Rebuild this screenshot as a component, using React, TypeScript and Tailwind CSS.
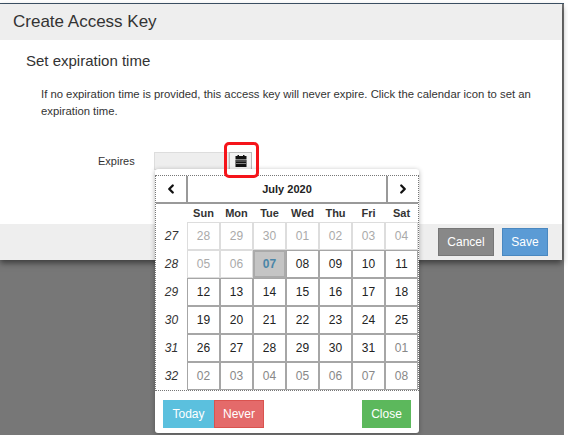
import React from 'react';
import { ChevronLeft, ChevronRight } from 'lucide-react';

type Day = { label: string; disabled?: boolean; muted?: boolean; today?: boolean };

const weeks: { num: number; days: Day[] }[] = [
  { num: 27, days: ['28', '29', '30', '01', '02', '03', '04'].map((label) => ({ label, disabled: true })) },
  {
    num: 28,
    days: [
      { label: '05', disabled: true },
      { label: '06', disabled: true },
      { label: '07', today: true },
      { label: '08' },
      { label: '09' },
      { label: '10' },
      { label: '11' },
    ],
  },
  { num: 29, days: ['12', '13', '14', '15', '16', '17', '18'].map((label) => ({ label })) },
  { num: 30, days: ['19', '20', '21', '22', '23', '24', '25'].map((label) => ({ label })) },
  {
    num: 31,
    days: [
      { label: '26' },
      { label: '27' },
      { label: '28' },
      { label: '29' },
      { label: '30' },
      { label: '31' },
      { label: '01', muted: true },
    ],
  },
  { num: 32, days: ['02', '03', '04', '05', '06', '07', '08'].map((label) => ({ label, muted: true })) },
];

const dayNames = ['Sun', 'Mon', 'Tue', 'Wed', 'Thu', 'Fri', 'Sat'];

function CalendarIcon() {
  return (
    <svg width="12" height="12" viewBox="0 0 12 12" fill="#111">
      <rect x="2.5" y="0" width="1.5" height="2" />
      <rect x="8" y="0" width="1.5" height="2" />
      <rect x="0.5" y="1" width="11" height="3" />
      <path d="M.5 4.5h11V12H.5zM1.5 5.5v1h1v-1zm2 0v1h1v-1zm2 0v1h1v-1zm2 0v1h1v-1zm2 0v1h1v-1zM1.5 8v1h1V8zm2 0v1h1V8zm2 0v1h1V8zm2 0v1h1V8zm2 0v1h1V8z" fillRule="evenodd" />
    </svg>
  );
}

function dayClass(d: Day) {
  if (d.today) return 'w-[33px] flex items-center justify-center font-bold text-[12px] text-[#4a86a8] bg-[#c4c4c4] border-2 border-[#aaa]';
  if (d.disabled) return 'w-[33px] flex items-center justify-center text-[12px] text-[#aaa] bg-white border border-[#ddd]';
  if (d.muted) return 'w-[33px] flex items-center justify-center text-[12px] text-[#888] bg-white border border-[#a6a6a6]';
  return 'w-[33px] flex items-center justify-center font-medium text-[12px] text-[#222] bg-white border border-[#a6a6a6]';
}

function DatePicker() {
  return (
    <div className="absolute left-[155px] top-[169px] w-[264px] h-[264px] bg-white rounded-[3px] shadow-[0_1px_5px_rgba(0,0,0,0.3)] pt-[6px]">
      <div className="border border-dotted border-[#777]">
        <div className="flex h-[28px] border-b-2 border-[#999]">
          <div className="w-[32px] flex items-center justify-center border-r-2 border-[#999]">
            <ChevronLeft size={14} strokeWidth={4} className="text-[#111]" />
          </div>
          <div className="flex-1 flex items-center justify-center font-bold text-[11px] text-[#222]">July 2020</div>
          <div className="w-[32px] flex items-center justify-center border-l-2 border-[#999]">
            <ChevronRight size={14} strokeWidth={4} className="text-[#111]" />
          </div>
        </div>
        <div className="flex h-[18px] items-center">
          <div className="w-[31px]" />
          {dayNames.map((d) => (
            <div key={d} className="w-[33px] text-center font-bold text-[11px] text-[#333]">{d}</div>
          ))}
        </div>
        {weeks.map((w) => (
          <div key={w.num} className="flex h-[28px]">
            <div className="w-[31px] flex items-center justify-center italic text-[12px] text-[#333]">{w.num}</div>
            {w.days.map((d) => (
              <div key={d.label + w.num} className={dayClass(d)}>
                {d.label}
              </div>
            ))}
          </div>
        ))}
      </div>
      <div className="flex justify-between px-[8px] pt-[9px]">
        <div className="flex">
          <button className="w-[51px] h-[28px] bg-[#5bc0de] text-white text-[12px]">Today</button>
          <button className="w-[50px] h-[28px] bg-[#e46a6a] border border-[#d9534f] text-white text-[12px]">Never</button>
        </div>
        <button className="w-[49px] h-[28px] bg-[#5cb85c] text-white text-[12px]">Close</button>
      </div>
    </div>
  );
}

export default function App() {
  return (
    <div className="relative w-[568px] h-[435px] overflow-hidden bg-white pt-[3px] pr-[4px] font-['Liberation_Sans',Arial,sans-serif]">
      <div className="h-full bg-[#777] border-t border-[#3f5468] pr-[2px]">
        <div className="bg-white shadow-[0_3px_6px_rgba(0,0,0,0.5)]">
          <div className="h-[36px] bg-[#eeeeee] flex items-center pl-[13px] text-[17px] text-[#333]">Create Access Key</div>
          <div className="h-[184px] pl-[26px] pr-[20px] pt-[13px] text-[#333]">
            <h2 className="text-[15px] leading-[16px]">Set expiration time</h2>
            <p className="mt-[17px] pl-[15px] text-[11.3px] leading-[17px]">
              If no expiration time is provided, this access key will never expire. Click the calendar icon to set an expiration time.
            </p>
            <div className="flex items-center mt-[32px] h-[18px]">
              <span className="w-[128px] pl-[72px] shrink-0 text-[11px]">Expires</span>
              <div className="w-[75px] h-[18px] bg-[#eeeeee] border border-[#ddd]" />
              <div className="relative w-[23px] h-[18px] bg-[#f2f2f2] border border-[#bbb] flex items-center justify-center">
                <CalendarIcon />
                {/* annotation drawn over the popup */}
                <div className="absolute z-10 -left-[6px] -top-[11px] w-[35px] h-[36px] border-[3px] border-[#f5141a] rounded-[5px]" />
              </div>
            </div>
          </div>
          <div className="h-[36px] bg-[#eeeeee] flex justify-end items-start gap-[8px] pr-[14px] pt-[4px]">
            <button className="w-[56px] h-[28px] bg-[#888] border border-[#777] text-white text-[12px]">Cancel</button>
            <button className="w-[46px] h-[28px] bg-[#5b9bd5] border border-[#4a88c0] text-white text-[12px]">Save</button>
          </div>
        </div>
      </div>
      <DatePicker />
    </div>
  );
}
